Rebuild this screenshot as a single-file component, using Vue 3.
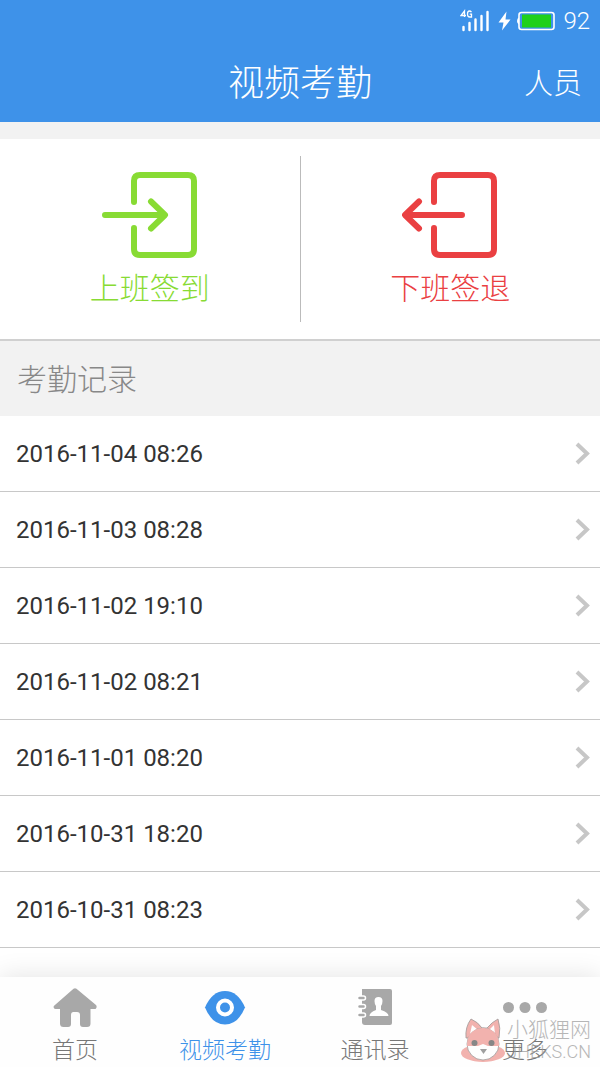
<template>
  <div class="page">
    <header class="header">
      <div class="status-bar">
        <svg class="signal" width="30" height="24" viewBox="0 0 30 24" aria-hidden="true">
          <path d="M4.5 8V2L1 6.500H6M11.500 3.200Q10.500 2 9.500 2Q7.500 2 7.500 5Q7.500 8 9.700 8H11.500V5.200H9.700" fill="none" stroke="#fff" stroke-width="1.300" />
          <path d="M3.500 18V21M9.500 14V21M15.500 10.500V21M21.500 7V21M27.500 3V21" fill="none" stroke="#fff" stroke-width="2.400" stroke-linecap="round" />
        </svg>
        <svg width="13" height="20" viewBox="0 0 13 20" aria-hidden="true">
          <path d="M8.500 .5L.5 11.500H5.500L4 19.500L12.500 8.500H7.500Z" fill="#fff" />
        </svg>
        <svg class="battery" width="38" height="20" viewBox="0 0 38 20" aria-hidden="true">
          <path d="M2 6.500Q0 7 0 10Q0 13 2 13.500Z" fill="#fff" />
          <rect x="2" y="1.500" width="35" height="17" rx="2.500" fill="none" stroke="#fff" stroke-width="1.600" />
          <rect x="5" y="3.500" width="29" height="13" fill="#1fd01b" />
        </svg>
        <span class="battery-level">92</span>
      </div>
      <div class="nav-bar">
        <h1 class="nav-title">视频考勤</h1>
        <button type="button" class="nav-action">人员</button>
      </div>
    </header>

    <section class="actions">
      <button type="button" class="action check-in">
        <svg width="96" height="88" viewBox="0 0 96 88" aria-hidden="true">
          <path d="M32 31V10Q32 4 38 4H86Q92 4 92 10V78Q92 84 86 84H38Q32 84 32 78V57M3 44H62M49 30.500L63 44L49 57.500" />
        </svg>
        <span>上班签到</span>
      </button>
      <button type="button" class="action check-out">
        <svg width="96" height="88" viewBox="0 0 96 88" aria-hidden="true">
          <path d="M32 31V10Q32 4 38 4H86Q92 4 92 10V78Q92 84 86 84H38Q32 84 32 78V57M60 44H4M17 30.500L3 44L17 57.500" />
        </svg>
        <span>下班签退</span>
      </button>
    </section>

    <h2 class="section-title">考勤记录</h2>
    <ul class="records">
      <li v-for="record in records" :key="record">
        <a href="#" class="record" @click.prevent>
          <span>{{ record }}</span>
          <svg width="16" height="24" viewBox="0 0 16 24" aria-hidden="true">
            <path d="M2 2L12 11.500L2 21" fill="none" stroke="#c7c7c7" stroke-width="4" />
          </svg>
        </a>
      </li>
    </ul>

    <nav class="tab-bar">
      <a
        v-for="tab in tabs"
        :key="tab.key"
        href="#"
        :class="['tab', { active: activeTab === tab.key }]"
        @click.prevent="activeTab = tab.key"
      >
        <svg width="44" height="40" viewBox="0 0 44 40" fill="currentColor" aria-hidden="true">
          <path v-if="tab.key === 'home'" d="M20.500 .8Q22 -.4 23.500 .8L43 17Q44.500 19 42.500 21H37.500V35.500Q37.500 39 34 39H30Q27 39 27 36V27Q27 24 24 24H20.500Q18 24 18 27V36Q18 39 15 39H10.500Q7 39 7 35.500V21H2.500Q0 21 .8 18Z" />
          <template v-else-if="tab.key === 'video'">
            <path d="M2 19.500Q9 3 22 3Q35 3 42 19.500Q35 36.500 22 36.500Q9 36.500 2 19.500Z" />
            <circle cx="22" cy="19.500" r="7" fill="none" stroke="#fff" stroke-width="4" />
          </template>
          <template v-else-if="tab.key === 'contacts'">
            <path d="M9 1H37Q39 1 39 3V35Q39 37 37 37H12Q9 37 9 34Z" />
            <path d="M16.500 28Q16.500 24.500 23 22V18Q21.500 16 21.500 13Q21.500 9 25.500 9Q29.500 9 29.500 13Q29.500 16 28 18V22Q35.500 24.500 35.500 28Z" fill="#fff" />
            <g stroke="#fff" stroke-width="1.500">
              <rect x="4.500" y="8" width="8" height="4" rx="2" />
              <rect x="4.500" y="16.500" width="8" height="4" rx="2" />
              <rect x="4.500" y="25" width="8" height="4" rx="2" />
            </g>
          </template>
          <template v-else>
            <circle cx="5.500" cy="19.500" r="5.500" />
            <circle cx="22" cy="19.500" r="5.500" />
            <circle cx="38.500" cy="19.500" r="5.500" />
          </template>
        </svg>
        <span>{{ tab.label }}</span>
      </a>
    </nav>

    <div class="watermark">
      <svg width="46" height="46" viewBox="0 0 46 46" aria-hidden="true">
        <ellipse cx="22" cy="35" rx="22" ry="9" fill="#ee938d" />
        <path d="M5 20Q4 9 10 1Q17 4 21 10H26Q31 4 37 1Q40 10 38 20Z" fill="#ee938d" stroke="#77706f" stroke-width=".8" />
        <path d="M9 16L11 7L17 12ZM34 16L33 7L28 12Z" fill="#fff" />
        <circle cx="22" cy="26" r="16" fill="#fff" stroke="#77706f" stroke-width=".8" />
        <path d="M6 28Q6 11 22 10Q38 11 38 28L27 28L22 26L17 28Z" fill="#ee938d" />
        <circle cx="13.500" cy="25" r="3" fill="#555" />
        <circle cx="30.500" cy="25" r="3" fill="#555" />
        <path d="M19 31H26L22.500 36Z" fill="#777" />
      </svg>
      <div class="watermark-text">
        <span>小狐狸网</span>
        <span class="watermark-site">JHEKS.CN</span>
      </div>
    </div>
  </div>
</template>

<script setup>
import { ref } from 'vue'

const activeTab = ref('video')

const records = [
  '2016-11-04 08:26',
  '2016-11-03 08:28',
  '2016-11-02 19:10',
  '2016-11-02 08:21',
  '2016-11-01 08:20',
  '2016-10-31 18:20',
  '2016-10-31 08:23',
]

const tabs = [
  { key: 'home', label: '首页' },
  { key: 'video', label: '视频考勤' },
  { key: 'contacts', label: '通讯录' },
  { key: 'more', label: '更多' },
]
</script>

<style>
body {
  margin: 0;
}
</style>

<style scoped>
.page {
  position: relative;
  box-sizing: border-box;
  min-height: 100vh;
  display: flex;
  flex-direction: column;
  background: #fff;
  font-family: Roboto, 'Noto Sans CJK SC', sans-serif;
  font-weight: 300;
}

button {
  padding: 0;
  border: none;
  background: none;
  font: inherit;
  cursor: pointer;
}

a {
  color: inherit;
  text-decoration: none;
}

.header {
  background: #3e92e9;
  color: #fff;
}

.status-bar {
  display: flex;
  align-items: center;
  justify-content: flex-end;
  height: 42px;
  padding-right: 10px;
}

.signal {
  margin-right: 8px;
}

.battery {
  margin: 0 8px 0 6px;
}

.battery-level {
  font-size: 24px;
  line-height: 28px;
}

.nav-bar {
  display: grid;
  grid-template-columns: 1fr auto 1fr;
  align-items: center;
  height: 76px;
  padding: 4px 18px 0;
}

.nav-title {
  grid-column: 2;
  margin: 0;
  font-size: 36px;
  font-weight: 300;
  line-height: 48px;
}

.nav-action {
  justify-self: end;
  color: #fff;
  font-size: 29px;
  line-height: 40px;
}

.actions {
  display: flex;
  padding: 17px 0;
  border-top: 17px solid #f2f2f2;
  border-bottom: 2px solid #d0d0d0;
}

.action {
  flex: 1;
  display: flex;
  flex-direction: column;
  align-items: center;
  gap: 9px;
  padding: 15px 0 12px;
  font-size: 30px;
  line-height: 42px;
}

.action + .action {
  border-left: 1px solid #bbb;
}

.action svg {
  fill: none;
  stroke: currentColor;
  stroke-width: 6;
  stroke-linecap: round;
  stroke-linejoin: round;
}

.check-in {
  color: #88db34;
}

.check-out {
  color: #ea4042;
}

.section-title {
  margin: 0;
  padding: 18px 17px 15px;
  background: #f2f2f2;
  color: #888;
  font-size: 30px;
  font-weight: 300;
  line-height: 42px;
}

.records {
  margin: 0;
  padding: 0;
  list-style: none;
}

.record {
  display: flex;
  align-items: center;
  justify-content: space-between;
  height: 75px;
  padding: 0 9px 0 16px;
  border-bottom: 1px solid #c8c8c8;
  color: #333;
  font-size: 24px;
  font-weight: 400;
}

.tab-bar {
  display: flex;
  height: 90px;
  margin-top: auto;
  background: #fefefe;
  box-shadow: 0 -2px 24px rgba(0, 0, 0, 0.1);
}

.tab {
  flex: 1;
  display: flex;
  flex-direction: column;
  align-items: center;
  gap: 7px;
  padding-top: 11px;
  color: #a8a8a8;
  font-size: 23px;
  line-height: 32px;
}

.tab svg {
  flex-shrink: 0;
}

.tab span {
  color: #777;
}

.tab.active,
.tab.active span {
  color: #3e92e9;
}

.watermark {
  position: absolute;
  right: 9px;
  bottom: 3px;
  display: flex;
  align-items: center;
  opacity: 0.7;
  color: #999;
  pointer-events: none;
}

.watermark-text {
  display: flex;
  flex-direction: column;
  align-items: flex-end;
  font-size: 21px;
  line-height: 22px;
}

.watermark-site {
  font-size: 18px;
}
</style>
